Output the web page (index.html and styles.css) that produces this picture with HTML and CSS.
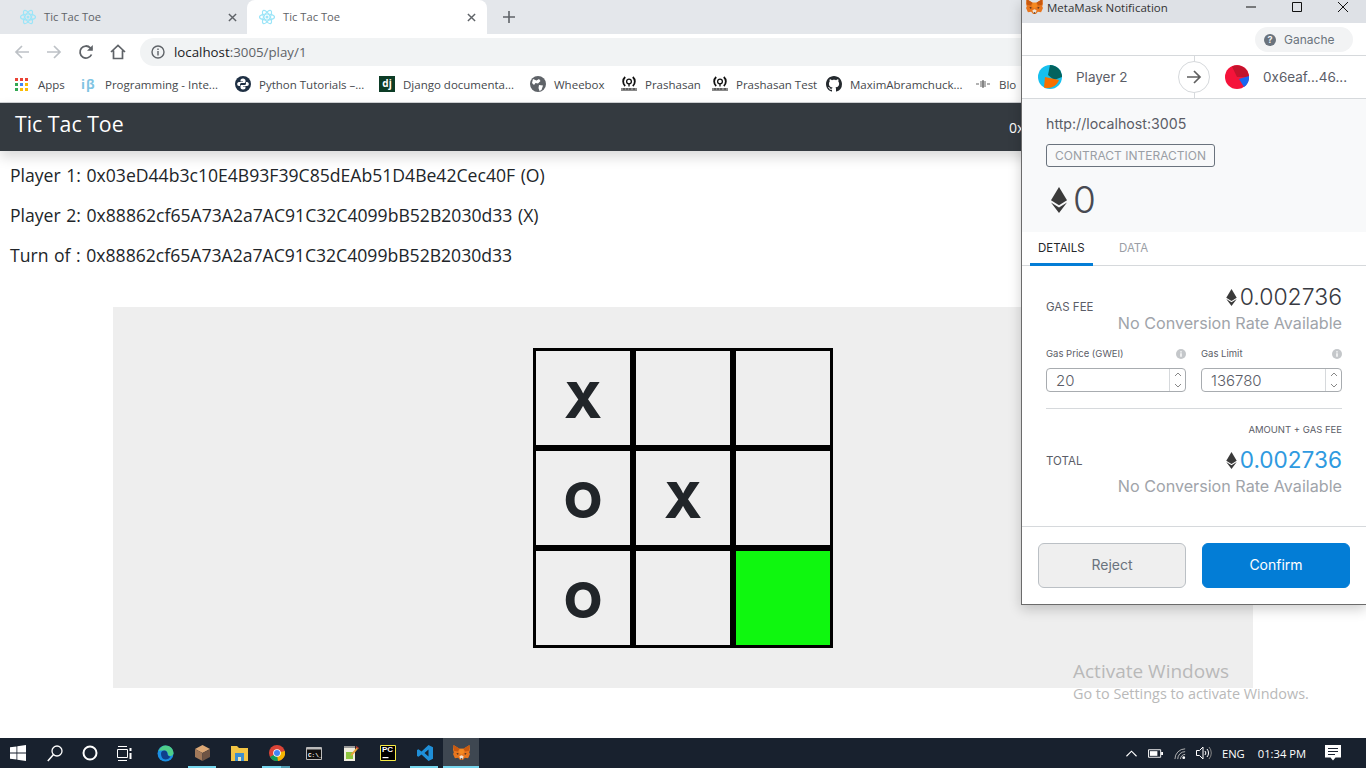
FILE: index.html
```html
<!DOCTYPE html>
<html lang="en">
<head>
    <meta charset="UTF-8">
    <title>Tic Tac Toe</title>
    <link rel="stylesheet" href="styles.css">
</head>
<body>
<svg class="defs" width="0" height="0">
    <symbol id="react" viewBox="0 0 16 16">
        <g fill="none" stroke="#9ce5f8" stroke-width="1.200">
            <ellipse cx="8" cy="8" rx="7.500" ry="3"/>
            <ellipse cx="8" cy="8" rx="7.500" ry="3" transform="rotate(60 8 8)"/>
            <ellipse cx="8" cy="8" rx="7.500" ry="3" transform="rotate(120 8 8)"/>
        </g>
        <circle cx="8" cy="8" r="1.500" fill="#9ce5f8"/>
    </symbol>
    <symbol id="close" viewBox="0 0 10 10">
        <path d="M1 1l8 8M9 1l-8 8" stroke="#5f6368" stroke-width="1.600" fill="none"/>
    </symbol>
    <symbol id="gov" viewBox="0 0 16 16">
        <path d="M4.200 1A6 6 0 0 0 4.200 10M11.800 1A6 6 0 0 1 11.800 10" fill="none" stroke="#111" stroke-width="1.800"/>
        <circle cx="8" cy="5.500" r="2.400" fill="none" stroke="#111" stroke-width="1.300"/>
        <path d="M8 7.500v3" stroke="#111" stroke-width="1.300"/>
        <path d="M0 12h16v3H0z" fill="#8a8a8a"/>
        <path d="M2 13h2M5 13h2M8 13h2M12 13h2" stroke="#333"/>
    </symbol>
    <symbol id="eth" viewBox="0 0 16 26">
        <path d="M8 0l8 13.200L8 18.200 0 13.200z" fill="#3a3a3a"/>
        <path d="M0 15.400l8 5 8-5L8 26z" fill="#3a3a3a"/>
    </symbol>
    <symbol id="fox" viewBox="0 0 18 17">
        <path d="M.5 0L7 4h4l6.500-4 .5 5-.8 3 .8 1.500-2 4.500-3.500-.5L10.500 16h-3L5.500 13.500 2 14 0 9.500.8 8 0 5z" fill="#e8761e"/>
        <path d="M.5 0L7 4 5 7 1 6zM17.500 0L11 4l2 3 4-1z" fill="#c9590f"/>
        <path d="M7 4h4l.8 4-2.800 2-2.800-2z" fill="#f58a22"/>
        <path d="M3.500 8.500l2.500.5-.8 1.500zM14.500 8.500L12 9l.8 1.500z" fill="#3a2a20"/>
        <path d="M6.800 12l2.200-1 2.200 1-.8 3H7.600z" fill="#efe3d6"/>
        <path d="M8 14.200h2l-.4 1.300H8.400z" fill="#3a3330"/>
    </symbol>
    <symbol id="info" viewBox="0 0 10 10">
        <circle cx="5" cy="5" r="5" fill="#c4c7ca"/>
        <path d="M4.300 4.300h1.400v3.500H4.300zM4.300 2.200h1.400v1.300H4.300z" fill="#fff"/>
    </symbol>
</svg>

<div class="tabstrip">
    <div class="tab">
        <svg class="favicon"><use href="#react"/></svg>
        <span class="tab-title">Tic Tac Toe</span>
        <svg class="tab-close"><use href="#close"/></svg>
    </div>
    <div class="tab tab-active">
        <svg class="favicon"><use href="#react"/></svg>
        <span class="tab-title">Tic Tac Toe</span>
        <svg class="tab-close"><use href="#close"/></svg>
    </div>
    <svg class="tab-new" viewBox="0 0 12 12"><path d="M6 0v12M0 6h12" stroke="#5f6368" stroke-width="1.600"/></svg>
</div>

<div class="toolbar">
    <svg class="nav-icon" viewBox="0 0 16 16"><path d="M15 8H2M8 2L2 8l6 6" fill="none" stroke="#bdc1c6" stroke-width="1.700"/></svg>
    <svg class="nav-icon" viewBox="0 0 16 16"><path d="M1 8h13M8 2l6 6-6 6" fill="none" stroke="#bdc1c6" stroke-width="1.700"/></svg>
    <svg class="nav-icon" viewBox="0 0 16 16"><path d="M13.500 10.500A6 6 0 1 1 12.300 3.800L14 5.500" fill="none" stroke="#5f6368" stroke-width="1.800"/><path d="M14.800 1v5.800H9z" fill="#5f6368"/></svg>
    <svg class="nav-icon" viewBox="0 0 16 16"><path d="M1 8l7-6.500L15 8M3.500 6.500v8h9v-8" fill="none" stroke="#5f6368" stroke-width="1.700"/></svg>
    <div class="omnibox">
        <svg class="omni-info" viewBox="0 0 14 14"><circle cx="7" cy="7" r="6" fill="none" stroke="#5f6368" stroke-width="1.400"/><path d="M6.300 6h1.400v4.500H6.300zM6.300 3.500h1.400v1.400H6.300z" fill="#5f6368"/></svg>
        <span class="omni-host">localhost</span><span class="omni-path">:3005/play/1</span>
    </div>
</div>

<div class="bookmarks">
    <div class="bm">
        <svg class="bm-icon" viewBox="0 0 13 13">
            <path d="M0 0h3v3H0z" fill="#ea4335"/><path d="M5 0h3v3H5z" fill="#ea4335"/><path d="M10 0h3v3h-3z" fill="#ea4335"/>
            <path d="M0 5h3v3H0z" fill="#34a853"/><path d="M5 5h3v3H5z" fill="#4285f4"/><path d="M10 5h3v3h-3z" fill="#fbbc04"/>
            <path d="M0 10h3v3H0z" fill="#34a853"/><path d="M5 10h3v3H5z" fill="#fbbc04"/><path d="M10 10h3v3h-3z" fill="#fbbc04"/>
        </svg>
        <span>Apps</span>
    </div>
    <div class="bm"><span class="bm-ib">iβ</span><span>Programming - Inte...</span></div>
    <div class="bm">
        <svg class="bm-icon" viewBox="0 0 16 16"><circle cx="8" cy="8" r="8" fill="#1f3044"/><path d="M8 2.500c-2 0-2.500 1-2.500 2v1H8V6H4c-1.200 0-1.800 1-1.800 2s.6 2 1.800 2h1V8.500c0-1 .8-1.500 1.500-1.500h3c.8 0 1-.6 1-1.200V4.500c0-1-1-2-2.500-2z" fill="#fff"/><path d="M8 13.500c2 0 2.500-1 2.500-2v-1H8V10h4c1.200 0 1.800-1 1.800-2s-.6-2-1.800-2h-1v1.500c0 1-.8 1.500-1.500 1.500h-3c-.8 0-1 .6-1 1.200v1.300c0 1 1 2 2.500 2z" fill="#fff"/></svg>
        <span>Python Tutorials –...</span>
    </div>
    <div class="bm"><span class="bm-dj">dj</span><span>Django documenta...</span></div>
    <div class="bm">
        <svg class="bm-icon" viewBox="0 0 16 16"><circle cx="8" cy="8" r="8" fill="#5f6368"/><path d="M3 3l3.500 1.500L9 3l1.500 2L8 7.500 5.500 7 4 9 2 7zM9 9l4 .5L11.500 14 9.500 15 8.500 12z" fill="#fff"/></svg>
        <span>Wheebox</span>
    </div>
    <div class="bm"><svg class="bm-icon"><use href="#gov"/></svg><span>Prashasan</span></div>
    <div class="bm"><svg class="bm-icon"><use href="#gov"/></svg><span>Prashasan Test</span></div>
    <div class="bm">
        <svg class="bm-icon" viewBox="0 0 16 16"><path fill="#24292e" d="M8 0C3.580 0 0 3.580 0 8c0 3.540 2.290 6.530 5.470 7.590.4.070.55-.17.55-.38 0-.19-.01-.82-.01-1.490-2.010.37-2.530-.49-2.690-.94-.09-.23-.48-.94-.82-1.130-.28-.15-.68-.52-.01-.53.63-.01 1.080.58 1.230.82.72 1.210 1.870.87 2.330.66.070-.52.28-.87.51-1.070-1.780-.2-3.640-.89-3.640-3.950 0-.87.31-1.590.82-2.150-.08-.2-.36-1.020.08-2.120 0 0 .67-.21 2.200.82.64-.18 1.320-.27 2-.27s1.360.09 2 .27c1.530-1.040 2.200-.82 2.200-.82.44 1.100.16 1.920.08 2.120.51.56.82 1.270.82 2.150 0 3.070-1.870 3.750-3.650 3.950.29.25.54.73.54 1.480 0 1.070-.01 1.930-.01 2.200 0 .21.15.46.55.38A8.010 8.010 0 0 0 16 8c0-4.420-3.580-8-8-8z"/></svg>
        <span>MaximAbramchuck...</span>
    </div>
    <div class="bm bm-last">
        <svg class="bm-icon" viewBox="0 0 16 16"><path d="M5 6h6M5 8h6M5 10h6M1 8h3M12 8h3M8 4v8" stroke="#666" stroke-width="1.200" fill="none"/></svg>
        <span>Blo</span>
    </div>
</div>

<div class="page">
    <nav class="navbar">
        <span class="brand">Tic Tac Toe</span>
        <span class="account">0x</span>
    </nav>
    <div class="info">
        <p>Player 1: 0x03eD44b3c10E4B93F39C85dEAb51D4Be42Cec40F (O)</p>
        <p>Player 2: 0x88862cf65A73A2a7AC91C32C4099bB52B2030d33 (X)</p>
        <p>Turn of : 0x88862cf65A73A2a7AC91C32C4099bB52B2030d33</p>
    </div>
    <div class="game">
        <div class="board">
            <div class="cell">X</div>
            <div class="cell"></div>
            <div class="cell"></div>
            <div class="cell">O</div>
            <div class="cell">X</div>
            <div class="cell"></div>
            <div class="cell">O</div>
            <div class="cell"></div>
            <div class="cell cell-hover"></div>
        </div>
    </div>
</div>

<div class="taskbar">
    <div class="tb-btn tb-start">
        <svg width="16" height="16" viewBox="0 0 16 16"><path d="M0 2.300l6.500-.9v6.200H0zM7.300 1.300L16 0v7.600H7.300zM0 8.400h6.500v6.200L0 13.700zM7.300 8.400H16V16l-8.700-1.300z" fill="#fff"/></svg>
    </div>
    <div class="tb-btn tb-search">
        <svg width="16" height="17" viewBox="0 0 16 17"><circle cx="10" cy="6" r="5" fill="none" stroke="#fff" stroke-width="1.300"/><path d="M6.500 9.500L.8 16" stroke="#fff" stroke-width="1.500"/></svg>
    </div>
    <div class="tb-btn tb-cortana">
        <svg width="16" height="16" viewBox="0 0 16 16"><circle cx="8" cy="8" r="6.500" fill="none" stroke="#fff" stroke-width="2"/></svg>
    </div>
    <div class="tb-btn tb-view">
        <svg width="16" height="15" viewBox="0 0 16 15"><path d="M.5 3.500h10v8H.5zM1 .5h9M1 14.500h9" fill="none" stroke="#fff" stroke-width="1"/><path d="M13.500 2v3M13.500 7v6" stroke="#fff" stroke-width="2"/></svg>
    </div>
    <div class="tb-gap"></div>
    <div class="tb-btn">
        <svg width="17" height="17" viewBox="0 0 17 17"><circle cx="8.500" cy="8.500" r="8" fill="#1b8fe3"/><path d="M1.500 6C2.800 2.500 5.500.5 8.500.5c4.500 0 8 3.500 8 7.500 0 2-1.500 3-3 3s-2.500-.7-2.500-1.500c0-2-1.500-4-4.500-4C4.500 5.500 2.800 5.500 1.500 6z" fill="#4fcf8a"/><path d="M4 8.500c0-2 2-3.200 3.500-3 1.800.2 3 1.500 3 3.500 0 1.500 1 2.500 3 2.500-1 2-3 3-5 3-3 0-4.500-3-4.500-6z" fill="#0f3f8c"/></svg>
    </div>
    <div class="tb-btn tb-on">
        <svg width="15" height="16" viewBox="0 0 15 16"><path d="M7.500 0L15 4 7.500 8 0 4z" fill="#dca876"/><path d="M0 4l7.500 4v8L0 12z" fill="#a0785a"/><path d="M15 4L7.500 8v8L15 12z" fill="#6f5444"/></svg>
    </div>
    <div class="tb-btn">
        <svg width="17" height="15" viewBox="0 0 17 15"><path d="M0 0h6l2 2h9v13H0z" fill="#f3c544"/><path d="M4 7h9v8H4z" fill="#3c8fd0"/><path d="M7 11h3v4H7z" fill="#f3e5b0"/></svg>
    </div>
    <div class="tb-btn tb-on tb-multi">
        <svg width="16" height="16" viewBox="0 0 16 16"><circle cx="8" cy="8" r="8" fill="#db4437"/><path d="M8 8L1 12a8 8 0 0 0 8 4z" fill="#0f9d58"/><path d="M8 8l7.800-2a8 8 0 0 1-6.800 10z" fill="#f4b400"/><circle cx="8" cy="8" r="3.800" fill="#fff"/><circle cx="8" cy="8" r="3" fill="#4285f4"/></svg>
    </div>
    <div class="tb-btn">
        <svg width="16" height="13" viewBox="0 0 16 13"><path d="M.5.500h15v12H.5z" fill="#111" stroke="#bbb"/><path d="M1 1h14v1.500H1z" fill="#bbb"/><text x="2" y="9.500" class="cmd-prompt">C:\_</text></svg>
    </div>
    <div class="tb-btn">
        <svg width="16" height="16" viewBox="0 0 16 16"><path d="M1 1h11v15H1z" fill="#f1eee0"/><path d="M1 1h11v2H1z" fill="#999"/><path d="M3 7h7v7H3z" fill="#8ec63f"/><path d="M8 9l6-7 1.500 1.200-6 7-2 .8z" fill="#e8a33d"/><path d="M13.500 1l2.500 2-1 1-2.500-2z" fill="#b5342c"/></svg>
    </div>
    <div class="tb-btn">
        <svg width="16" height="16" viewBox="0 0 16 16"><path d="M.5.500h15v15H.5z" fill="#000" stroke="#f6ea44"/><path d="M2.500 12h6v1.200h-6z" fill="#fff"/></svg>
        <span class="pc-label">PC</span>
    </div>
    <div class="tb-btn tb-on">
        <svg width="16" height="16" viewBox="0 0 16 16"><path d="M11.500 0L16 2.200v11.600L11.500 16 4.500 9.500 1.500 11.800 0 11V5l1.500-.8 3 2.300zM11.500 4.500L7.500 8l4 3.500z" fill="#1f8fd8"/></svg>
    </div>
    <div class="tb-btn tb-current">
        <svg width="17" height="16"><use href="#fox"/></svg>
    </div>
    <div class="tray">
        <svg class="tray-chevron" viewBox="0 0 12 7"><path d="M.5 6.500L6 1l5.500 5.500" fill="none" stroke="#fff" stroke-width="1.200"/></svg>
        <svg class="tray-battery" viewBox="0 0 16 9"><path d="M.5.500h13v8H.5z" fill="none" stroke="#fff"/><path d="M2 2h8v5H2z" fill="#fff"/><path d="M14 3h2v3h-2z" fill="#fff"/></svg>
        <svg class="tray-wifi" viewBox="0 0 14 14"><path d="M1 13A11 11 0 0 1 12 2M4 13a8 8 0 0 1 8-8M7 13a5 5 0 0 1 5-5" fill="none" stroke="#bbb" stroke-width="1"/><circle cx="10.500" cy="11.500" r="1.500" fill="#fff"/></svg>
        <svg class="tray-sound" viewBox="0 0 16 14"><path d="M.5 4.500h3L7 1v12L3.500 9.500h-3z" fill="none" stroke="#fff"/><path d="M9 5a3 3 0 0 1 0 4M11 3a6 6 0 0 1 0 8" fill="none" stroke="#fff"/><path d="M13 1a9 9 0 0 1 0 12" fill="none" stroke="#888"/></svg>
        <span class="tray-lang">ENG</span>
        <span class="tray-time">01:34 PM</span>
        <svg class="tray-note" viewBox="0 0 16 16"><path d="M0 0h16v12.500h-5.500L8 15.500 5.500 12.500H0z" fill="#fff"/><path d="M3 3.500h10M3 6.500h10M3 9.500h7" stroke="#1a2230"/></svg>
    </div>
</div>

<div class="activate">
    <div class="activate-title">Activate Windows</div>
    <div class="activate-sub">Go to Settings to activate Windows.</div>
</div>

<div class="mm">
    <div class="mm-titlebar">
        <svg class="mm-fox"><use href="#fox"/></svg>
        <span class="mm-title">MetaMask Notification</span>
        <svg class="win-btn" viewBox="0 0 10 10"><path d="M0 5h10" stroke="#111"/></svg>
        <svg class="win-btn" viewBox="0 0 10 10"><path d="M.5.500h9v9h-9z" fill="none" stroke="#111"/></svg>
        <svg class="win-btn" viewBox="0 0 10 10"><path d="M0 0l10 10M10 0L0 10" stroke="#111"/></svg>
    </div>
    <div class="mm-network">
        <div class="mm-pill">
            <svg class="mm-help" viewBox="0 0 12 12"><circle cx="6" cy="6" r="6" fill="#6a737d"/><text x="6" y="9.300" text-anchor="middle" class="mm-help-q">?</text></svg>
            <span>Ganache</span>
        </div>
    </div>
    <div class="mm-parties">
        <div class="mm-party">
            <svg class="mm-avatar" viewBox="0 0 24 24"><circle cx="12" cy="12" r="12" fill="#17c0ee"/><path d="M12 0a12 12 0 0 1 12 12l-8 3-6-5z" fill="#03635f"/><path d="M7 12l14 3a12 12 0 0 1-15 7.500z" fill="#f77000"/></svg>
            <span>Player 2</span>
        </div>
        <div class="mm-arrow">
            <svg viewBox="0 0 16 14"><path d="M1 7h13M8 1l6 6-6 6" fill="none" stroke="#5f5f5f" stroke-width="1.700"/></svg>
        </div>
        <div class="mm-party mm-party-to">
            <svg class="mm-avatar" viewBox="0 0 24 24"><circle cx="12" cy="12" r="12" fill="#f5133a"/><path d="M12 12L7 1.500A12 12 0 0 1 24 12z" fill="#c3132c"/><path d="M14 14l10-3a12 12 0 0 1-5 11z" fill="#1a66f0"/></svg>
            <span>0x6eaf...46...</span>
        </div>
    </div>
    <div class="mm-summary">
        <div class="mm-origin">http://localhost:3005</div>
        <div class="mm-badge">CONTRACT INTERACTION</div>
        <div class="mm-amount">
            <svg class="mm-eth-big"><use href="#eth"/></svg>
            <span>0</span>
        </div>
    </div>
    <div class="mm-tabs">
        <div class="mm-tab mm-tab-active">DETAILS</div>
        <div class="mm-tab">DATA</div>
    </div>
    <div class="mm-details">
        <div class="mm-row">
            <span class="mm-label">GAS FEE</span>
            <div class="mm-cost">
                <div class="mm-value"><svg class="mm-eth"><use href="#eth"/></svg>0.002736</div>
                <div class="mm-noconv">No Conversion Rate Available</div>
            </div>
        </div>
        <div class="mm-fields">
            <div class="mm-field">
                <div class="mm-field-label"><span>Gas Price (GWEI)</span><svg class="mm-i"><use href="#info"/></svg></div>
                <div class="mm-input"><span>20</span><span class="mm-spin">
                    <svg viewBox="0 0 8 18"><path d="M1 5l3-3 3 3M1 13l3 3 3-3" fill="none" stroke="#888"/></svg>
                </span></div>
            </div>
            <div class="mm-field">
                <div class="mm-field-label"><span>Gas Limit</span><svg class="mm-i"><use href="#info"/></svg></div>
                <div class="mm-input"><span>136780</span><span class="mm-spin">
                    <svg viewBox="0 0 8 18"><path d="M1 5l3-3 3 3M1 13l3 3 3-3" fill="none" stroke="#888"/></svg>
                </span></div>
            </div>
        </div>
        <div class="mm-sum-note">AMOUNT + GAS FEE</div>
        <div class="mm-row mm-row-total">
            <span class="mm-label mm-label-total">TOTAL</span>
            <div class="mm-cost">
                <div class="mm-value mm-value-total"><svg class="mm-eth"><use href="#eth"/></svg>0.002736</div>
                <div class="mm-noconv">No Conversion Rate Available</div>
            </div>
        </div>
    </div>
    <div class="mm-footer">
        <div class="mm-btn mm-reject">Reject</div>
        <div class="mm-btn mm-confirm">Confirm</div>
    </div>
</div>
</body>
</html>
```

FILE: styles.css
```css
*{
    margin:0;
    padding:0;
    box-sizing:border-box;
}
html,body{
    height:768px;
    overflow:hidden;
}
body{
    display:flex;
    flex-direction:column;
    position:relative;
    width:1366px;
    background:#fff;
    color:#212529;
    font-family:"Open Sans","Noto Sans",sans-serif;
}
.defs{
    position:absolute;
}

/* browser chrome */
.tabstrip{
    height:34px;
    background:#e4e7eb;
    display:flex;
    align-items:center;
    flex:none;
}
.tab{
    width:247px;
    height:34px;
    padding:0 0 0 20px;
    display:flex;
    align-items:center;
    font-size:11.200px;
    color:#5f6368;
}
.tab-active{
    width:240px;
    background:#fff;
    border-radius:8px 8px 0 0;
    padding-left:12px;
}
.favicon{
    width:16px;
    height:16px;
    flex:none;
}
.tab-title{
    margin:-2px 0 0 8px;
    flex:1;
}
.tab-close{
    width:9px;
    height:9px;
    margin-right:10px;
}
.tab-active .tab-close{
    margin-right:11px;
}
.tab-new{
    width:12px;
    height:12px;
    margin-left:16px;
}
.toolbar{
    height:35px;
    flex:none;
    display:flex;
    align-items:center;
    padding-left:14px;
    background:#fff;
}
.nav-icon{
    width:16px;
    height:16px;
    margin-right:16px;
}
.omnibox{
    width:1000px;
    height:28px;
    margin-left:-2px;
    border-radius:14px;
    background:#f1f3f4;
    display:flex;
    align-items:center;
    padding-left:11px;
    font-size:13.300px;
    color:#202124;
}
.omni-info{
    width:14px;
    height:14px;
    margin-right:9px;
}
.omni-path{
    color:#5f6368;
}
.bookmarks{
    height:34px;
    flex:none;
    display:grid;
    grid-template-columns:66px 154px 144px 151px 91px 91px 114px 149px 46px;
    align-items:center;
    padding:0 0 3px 15px;
    background:#fff;
    border-bottom:1px solid #d0d2d5;
    font-size:11.500px;
    color:#45484c;
    white-space:nowrap;
}
.bm{
    display:flex;
    align-items:center;
    gap:8px;
}
.bm-icon{
    width:16px;
    height:16px;
    flex:none;
}
.bm:first-child .bm-icon{
    width:13px;
    height:13px;
    margin-right:2px;
}
.bm-ib{
    width:16px;
    font-weight:700;
    font-size:13px;
    color:#7fc4e3;
    letter-spacing:1px;
}
.bm-dj{
    width:16px;
    height:16px;
    background:#0c3c26;
    color:#fff;
    font-size:10px;
    font-weight:700;
    line-height:15px;
    text-align:center;
}

/* page */
.page{
    flex:1;
    min-height:0;
}
.navbar{
    height:48px;
    background:#343a40;
    box-shadow:0 6px 12px rgba(0,0,0,.15);
    display:flex;
    align-items:center;
    justify-content:space-between;
    padding-left:15px;
    color:#fff;
    position:relative;
}
.brand{
    font-size:21.300px;
    font-weight:500;
    margin-top:-8px;
}
.account{
    width:357px;
    font-size:14px;
    white-space:nowrap;
}
.info{
    padding:12px 0 0 10px;
    font-size:17.600px;
    word-spacing:1px;
    line-height:24px;
}
.info p{
    margin-bottom:16px;
}
.game{
    width:1140px;
    height:381px;
    margin:40px auto 0;
    padding-top:41px;
    background:#eee;
}
.board{
    width:300px;
    margin:0 auto;
    display:grid;
    grid-template-columns:repeat(3,100px);
    grid-auto-rows:100px;
}
.cell{
    border:3px solid #000;
    padding-top:3px;
    display:flex;
    align-items:center;
    justify-content:center;
    font-family:Inter,"Liberation Sans",sans-serif;
    font-size:50px;
    font-weight:800;
}
.cell-hover{
    background:#0ff70f;
}

/* taskbar */
.taskbar{
    height:30px;
    flex:none;
    background:#18212e;
    display:flex;
    color:#fff;
}
.tb-btn{
    width:37px;
    height:30px;
    display:flex;
    align-items:center;
    justify-content:center;
    position:relative;
}
.tb-start,.tb-view{
    width:36px;
}
.tb-cortana{
    width:34px;
}
.tb-gap{
    width:4px;
}
.tb-on::after,.tb-current::after{
    content:"";
    position:absolute;
    left:4px;
    right:5px;
    bottom:0;
    height:2px;
    background:#76d6ee;
}
.tb-multi::after{
    background:linear-gradient(90deg,#76d6ee 68%,#4f9bb0 68%);
}
.tb-current{
    width:36px;
    background:#3e4751;
}
.tb-current::after{
    left:0;
    right:0;
}
.cmd-prompt{
    font-family:"Liberation Mono",monospace;
    font-size:6px;
    font-weight:700;
    fill:#fff;
}
.pc-label{
    position:absolute;
    top:7px;
    left:13px;
    font-size:8px;
    font-weight:700;
    font-family:"Liberation Sans",sans-serif;
}
.tray{
    margin-left:auto;
    display:flex;
    align-items:center;
    font-size:11.200px;
    padding-right:25px;
}
.tray-chevron{
    width:11px;
    height:7px;
    margin-right:11px;
}
.tray-battery{
    width:15px;
    height:9px;
    margin-right:11px;
}
.tray-wifi{
    width:13px;
    height:13px;
    margin-right:9px;
}
.tray-sound{
    width:16px;
    height:14px;
    margin-right:10px;
}
.tray-lang{
    margin-right:13px;
}
.tray-time{
    margin-right:19px;
}
.tray-note{
    width:16px;
    height:16px;
}

.activate{
    position:absolute;
    left:1073px;
    top:658px;
    color:#b9b9b9;
}
.activate-title{
    font-size:19px;
    line-height:26px;
}
.activate-sub{
    font-size:14.400px;
    line-height:20px;
}

/* metamask popup */
.mm{
    position:absolute;
    left:1021px;
    top:0;
    width:345px;
    height:605px;
    background:#fff;
    border:1px solid #6b6b6b;
    border-top:0;
    border-right:0;
    box-shadow:0 4px 12px rgba(0,0,0,.2);
    display:flex;
    flex-direction:column;
    font-family:Inter,"Open Sans",sans-serif;
    color:#5b5d67;
}
.mm-titlebar{
    height:23px;
    flex:none;
    background:#dee1e6;
    display:flex;
    align-items:center;
    padding:0 0 9px 4px;
    font-family:"Open Sans",sans-serif;
    font-size:11.500px;
    color:#333;
}
.mm-fox{
    width:17px;
    height:16px;
    margin-right:4px;
    flex:none;
}
.mm-title{
    width:199px;
    flex:none;
}
.win-btn{
    width:10px;
    height:10px;
    margin-right:36px;
    flex:none;
}
.win-btn:last-child{
    margin-right:0;
}
.mm-network{
    height:33px;
    flex:none;
    display:flex;
    justify-content:flex-end;
    align-items:center;
    padding-right:13px;
    border-bottom:1px solid #d6d9dc;
}
.mm-pill{
    width:98px;
    height:25px;
    margin-top:1px;
    border-radius:13px;
    background:#f2f3f4;
    display:flex;
    align-items:center;
    padding-left:9px;
    gap:8px;
    font-size:12px;
    color:#6a737d;
}
.mm-help{
    width:12px;
    height:12px;
}
.mm-help-q{
    font-size:9px;
    font-weight:700;
    fill:#f2f3f4;
}
.mm-parties{
    height:43px;
    flex:none;
    display:flex;
    align-items:center;
    border-bottom:1px solid #d6d9dc;
    font-size:13.500px;
    background:linear-gradient(#d6d9dc,#d6d9dc) 172px 0/1px 100% no-repeat;
}
.mm-party{
    display:flex;
    align-items:center;
    gap:14px;
    width:156px;
    padding-left:16px;
}
.mm-party-to{
    width:auto;
    padding-left:15px;
}
.mm-avatar{
    width:24px;
    height:24px;
    flex:none;
}
.mm-arrow{
    width:32px;
    height:32px;
    flex:none;
    border:1px solid #d6d9dc;
    border-radius:50%;
    background:#fff;
    display:flex;
    align-items:center;
    justify-content:center;
}
.mm-arrow svg{
    width:16px;
    height:14px;
}
.mm-summary{
    height:133px;
    flex:none;
    background:#f8f9fa;
    padding:15px 0 0 24px;
}
.mm-origin{
    font-size:14.200px;
    line-height:20px;
}
.mm-badge{
    width:169px;
    height:23px;
    margin-top:10px;
    border:1px solid #6a737d;
    border-radius:3px;
    font-size:12px;
    line-height:21px;
    text-align:center;
    color:#9a9ea5;
}
.mm-amount{
    display:flex;
    align-items:center;
    gap:6px;
    margin:11px 0 0 5px;
    font-size:37px;
    font-weight:300;
    line-height:44px;
    color:#484a52;
}
.mm-eth-big{
    width:16px;
    height:26px;
}
.mm-tabs{
    height:34px;
    flex:none;
    display:flex;
    padding-left:8px;
    border-bottom:1px solid #d6d9dc;
    font-size:11.500px;
    color:#9a9ea5;
}
.mm-tab{
    padding:0 8px;
    width:63px;
    line-height:33px;
    margin-right:18px;
}
.mm-tab-active{
    color:#24272a;
    border-bottom:3px solid #037dd6;
    height:34px;
}
.mm-details{
    flex:1;
    padding:19px 24px 0;
}
.mm-row{
    display:flex;
    justify-content:space-between;
    align-items:center;
}
.mm-label{
    font-size:11.500px;
    margin-top:-8px;
}
.mm-label-total{
    margin-top:-26px;
}
.mm-cost{
    text-align:right;
}
.mm-value{
    font-size:23px;
    font-weight:300;
    line-height:26px;
    margin-top:-1px;
    color:#383a42;
    display:flex;
    justify-content:flex-end;
    align-items:center;
    gap:3px;
}
.mm-value-total{
    color:#2f9ae0;
    font-weight:400;
    font-size:22.600px;
}
.mm-eth{
    width:11px;
    height:17px;
}
.mm-noconv{
    margin-top:1px;
    font-size:16.150px;
    line-height:25px;
    color:#a0a4aa;
}
.mm-fields{
    display:grid;
    grid-template-columns:140px 141px;
    gap:15px;
    margin-top:11px;
    padding-bottom:16px;
    border-bottom:1px solid #d6d9dc;
}
.mm-field-label{
    display:flex;
    justify-content:space-between;
    align-items:center;
    font-size:9.500px;
    line-height:14px;
}
.mm-i{
    width:10px;
    height:10px;
}
.mm-input{
    height:24px;
    margin-top:7px;
    border:1px solid #a8acb0;
    border-radius:4px;
    display:flex;
    justify-content:space-between;
    padding-left:9px;
    font-size:15px;
    font-weight:300;
    line-height:24px;
    overflow:hidden;
}
.mm-spin{
    width:16px;
    border-left:1px solid #d6d9dc;
    display:flex;
    align-items:center;
    justify-content:center;
}
.mm-spin svg{
    width:8px;
    height:18px;
}
.mm-sum-note{
    text-align:right;
    font-size:9.500px;
    line-height:14px;
    margin-top:14px;
}
.mm-row-total{
    margin-top:11px;
}
.mm-footer{
    height:78px;
    flex:none;
    border-top:1px solid #d6d9dc;
    display:flex;
    gap:16px;
    padding:16px 16px 0;
}
.mm-btn{
    width:148px;
    height:45px;
    border-radius:6px;
    text-align:center;
    font-size:14px;
    line-height:42px;
}
.mm-reject{
    background:#efefef;
    border:1px solid #bbc0c5;
    color:#6a737d;
}
.mm-confirm{
    background:#037dd6;
    border:1px solid #037dd6;
    color:#fff;
}
```
